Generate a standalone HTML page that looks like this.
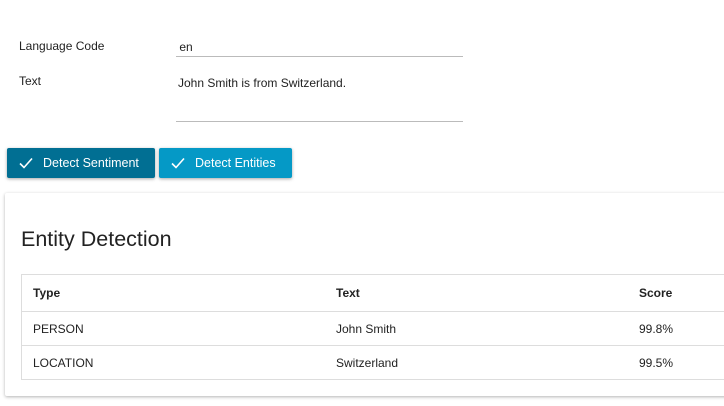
<!DOCTYPE html>
<html><head><style>
body{margin:0;width:724px;height:406px;overflow:hidden;background:#fff;font-family:"Liberation Sans",sans-serif;color:#222;position:relative}
.a{position:absolute}
.lbl{font-size:12px;color:#222}
.in{border-bottom:1px solid #bbb;font-size:12px}
.btn{position:absolute;top:148px;height:30px;color:#fff;font-size:12.5px;border-radius:2px;box-shadow:0 1px 3px rgba(0,0,0,.35);display:flex;align-items:center}
.btn svg{margin:0 10px 0 12px}
.card{left:5px;top:193px;width:740px;height:203px;box-shadow:0 1px 3px rgba(0,0,0,.3);border-radius:2px}
table{position:absolute;left:21px;top:274px;width:720px;border-collapse:collapse;font-size:12px}
td{border-top:1px solid #ddd;height:33px;padding:0 0 0 11px}
table{border:1px solid #ddd}
</style></head><body>
<div class="a lbl" style="left:19px;top:39px">Language Code</div>
<div class="a in" style="left:176px;top:40px;width:287px;height:16px">&nbsp;en</div>
<div class="a lbl" style="left:19px;top:74px">Text</div>
<div class="a lbl" style="left:178px;top:76px">John Smith is from Switzerland.</div>
<div class="a" style="left:176px;top:121px;width:287px;border-top:1px solid #bbb"></div>
<div class="btn" style="left:7px;width:148px;background:#016f93"><svg width="14" height="12" viewBox="0 0 14 12"><path d="M1 6.5l4 4L13 1.5" stroke="#fff" stroke-width="1.6" fill="none"/></svg>Detect Sentiment</div>
<div class="btn" style="left:159px;width:133px;background:#0599c6"><svg width="14" height="12" viewBox="0 0 14 12"><path d="M1 6.5l4 4L13 1.5" stroke="#fff" stroke-width="1.6" fill="none"/></svg>Detect Entities</div>
<div class="a card"></div>
<div class="a" style="left:21px;top:227px;font-size:21.5px;color:#222">Entity Detection</div>
<table>
<tr><td style="border-top:0;height:36px;width:292px"><b>Type</b></td><td style="border-top:0;width:292px"><b>Text</b></td><td style="border-top:0"><b>Score</b></td></tr>
<tr><td>PERSON</td><td>John Smith</td><td>99.8%</td></tr>
<tr><td>LOCATION</td><td>Switzerland</td><td>99.5%</td></tr>
</table>
</body></html>
